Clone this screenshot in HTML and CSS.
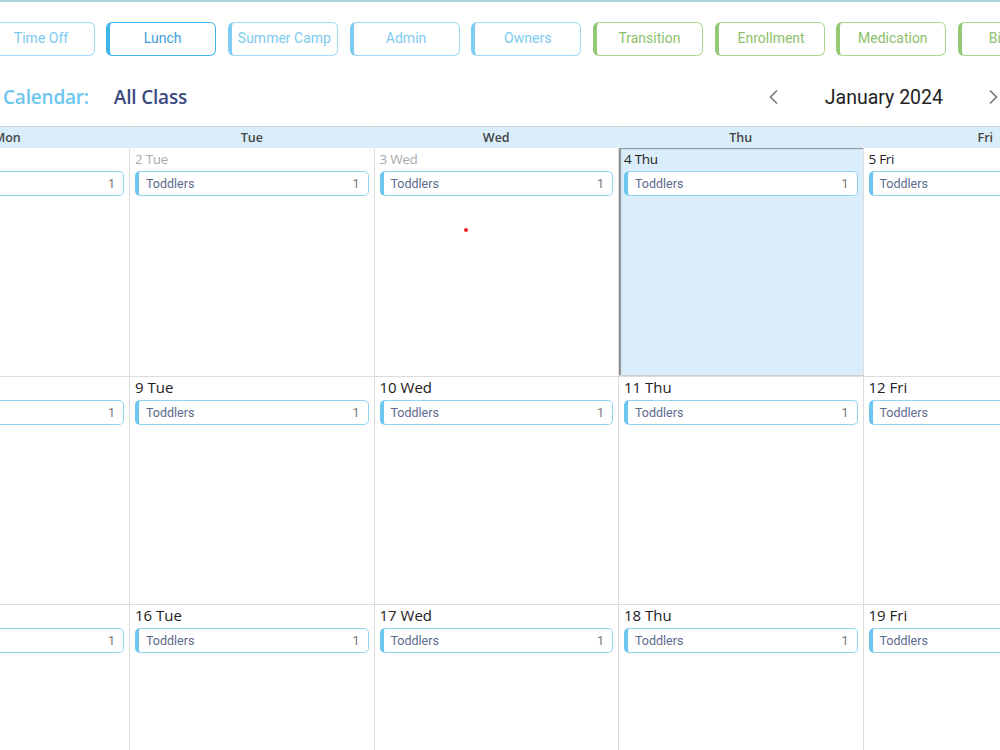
FILE: index.html
```html
<!DOCTYPE html>
<html lang="en">
<head>
    <meta charset="UTF-8">
    <meta name="viewport" content="width=device-width, initial-scale=1.0">
    <title>Calendar - All Class</title>
    <link rel="stylesheet" href="styles.css">
</head>
<body>
    <div class="top-line"></div>

    <div class="filters">
        <button class="filter blue">Time Off</button>
        <button class="filter blue active">Lunch</button>
        <button class="filter blue">Summer Camp</button>
        <button class="filter blue">Admin</button>
        <button class="filter blue">Owners</button>
        <button class="filter green">Transition</button>
        <button class="filter green">Enrollment</button>
        <button class="filter green">Medication</button>
        <button class="filter green">Birthday</button>
    </div>

    <div class="title-row">
        <div class="title">
            <span class="title-label">Calendar:</span>
            <span class="title-class">All Class</span>
        </div>
        <div class="month-nav">
            <button class="nav-btn" aria-label="Previous month">
                <svg width="12" height="16" viewBox="0 0 12 16"><path d="M9 1.5 L2.5 8 L9 14.5" fill="none" stroke="#777" stroke-width="1.6"/></svg>
            </button>
            <span class="month">January 2024</span>
            <button class="nav-btn" aria-label="Next month">
                <svg width="12" height="16" viewBox="0 0 12 16"><path d="M3 1.5 L9.5 8 L3 14.5" fill="none" stroke="#777" stroke-width="1.6"/></svg>
            </button>
        </div>
    </div>

    <div class="calendar">
        <div class="week-head">
            <div class="head-cell">Mon</div>
            <div class="head-cell">Tue</div>
            <div class="head-cell">Wed</div>
            <div class="head-cell">Thu</div>
            <div class="head-cell">Fri</div>
        </div>
        <div id="weeks"></div>
        <span class="dot"></span>
    </div>

    <script>
        document.addEventListener('DOMContentLoaded', function() {
            const weeks = document.getElementById('weeks');
            const names = ['Mon', 'Tue', 'Wed', 'Thu', 'Fri'];
            const starts = [1, 8, 15];
            const today = 4;

            starts.forEach(function(start, w) {
                const row = document.createElement('div');
                row.className = 'week' + (w === 0 ? ' first' : '');

                names.forEach(function(name, i) {
                    const day = start + i;
                    const cell = document.createElement('div');
                    cell.className = 'day';
                    if (day === today) cell.classList.add('today');

                    const label = document.createElement('div');
                    label.className = 'day-label';
                    if (day < today) label.classList.add('past');
                    label.textContent = day + ' ' + name;
                    cell.appendChild(label);

                    const chip = document.createElement('div');
                    chip.className = 'event';
                    chip.innerHTML = '<span>Toddlers</span><span class="count">1</span>';
                    cell.appendChild(chip);

                    row.appendChild(cell);
                });
                weeks.appendChild(row);
            });
        });
    </script>
</body>
</html>
```

FILE: styles.css
```css
body {
    margin: 0;
    width: 1000px;
    overflow: hidden;
    font-family: Roboto, "Liberation Sans", sans-serif;
    background: #fff;
}
.top-line {
    height: 2px;
    background: #a9d3d8;
}

/* category filter buttons */
.filters {
    display: flex;
    gap: 11.7px;
    margin: 20px 0 0 -15.5px;
    white-space: nowrap;
}
.filter {
    flex: 0 0 110px;
    height: 34px;
    padding: 0 0 2px;
    background: #fff;
    border-radius: 6px;
    font-family: Roboto, "Liberation Sans", sans-serif;
    font-size: 14px;
    cursor: pointer;
    overflow: hidden;
}
.filter.blue {
    border: 1px solid #9ed9f6;
    border-left: 4px solid #7fcdf2;
    color: #7ccaf0;
}
.filter.blue.active {
    border-color: #3fb4e8;
    color: #3e9ed8;
}
.filter.green {
    border: 1px solid #add78f;
    border-left: 4px solid #93c874;
    color: #8cc06c;
}

/* title and month navigation */
.title-row {
    display: flex;
    justify-content: space-between;
    align-items: center;
    height: 70px;
    padding-top: 12px;
    box-sizing: border-box;
}
.title {
    display: flex;
    gap: 25px;
    margin-left: 3px;
    font-family: "Open Sans", sans-serif;
    font-size: 19px;
    font-weight: 600;
    letter-spacing: -0.2px;
}
.title-label {
    color: #6dc6ef;
}
.title-class {
    color: #3c4b7f;
}
.month-nav {
    display: flex;
    align-items: center;
    margin-right: 1px;
}
.nav-btn {
    border: none;
    background: none;
    padding: 0;
    width: 12px;
    height: 16px;
    display: flex;
    cursor: pointer;
}
.month {
    margin: 0 44px 0 45px;
    font-size: 19.5px;
    color: #222;
}

/* month grid */
.calendar {
    position: relative;
    margin-left: -114.5px;
    width: 1222.5px;
}
.week-head,
.week {
    display: grid;
    grid-template-columns: repeat(5, 244.5px);
}
.week-head {
    border-top: 1px solid #cfcfcf;
    background: #d9eefa;
}
.head-cell {
    height: 21px;
    line-height: 21px;
    text-align: center;
    font-family: "Open Sans", sans-serif;
    font-size: 12.5px;
    font-weight: 600;
    color: #444;
    border-right: 1px solid #e6eef3;
}
.week {
    height: 228px;
    box-sizing: border-box;
    border-top: 1px solid #dcdcdc;
}
.week.first {
    border-top: none;
}
.day {
    border-right: 1px solid #dcdcdc;
    padding: 0 5px;
}
.day.today {
    background: #d9eefa;
    box-shadow: inset 3px 2px 1px -1px #8d8d8d;
    border-bottom: 1px solid #cfcfcf;
}
.day-label {
    font-family: "Open Sans", sans-serif;
    font-size: 15px;
    line-height: 21px;
    color: #222;
}
.week.first .day-label {
    font-size: 13.5px;
    line-height: 20px;
    padding-top: 1px;
    letter-spacing: -0.3px;
}
.week.first .day-label.past {
    color: #aaa;
}
.event {
    display: flex;
    justify-content: space-between;
    align-items: center;
    height: 25px;
    margin-top: 2px;
    padding: 0 8px 0 7px;
    box-sizing: border-box;
    background: #fff;
    border: 1px solid #92d4f4;
    border-left: 4px solid #6dc6ef;
    border-radius: 5px;
    font-size: 12.5px;
    color: #5c6a8d;
}
.event .count {
    color: #777;
}
.dot {
    position: absolute;
    left: 578px;
    top: 102px;
    width: 4px;
    height: 4px;
    border-radius: 50%;
    background: #e8231f;
}
```
